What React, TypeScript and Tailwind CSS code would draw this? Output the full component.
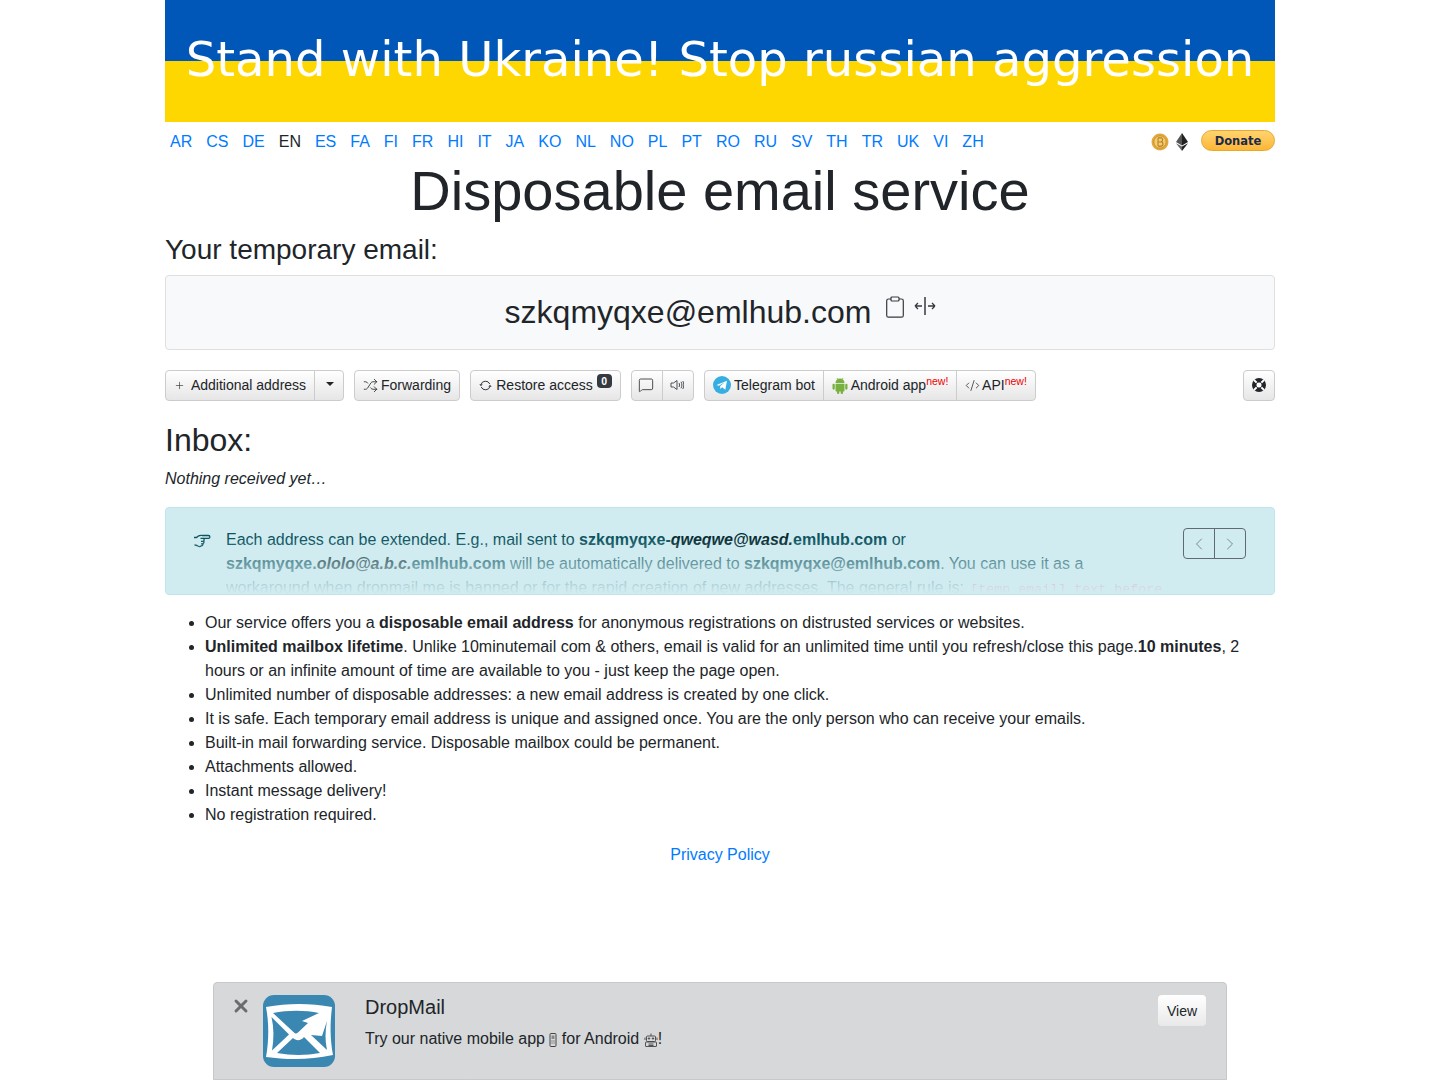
import { Plus, Shuffle, MessageSquare, ChevronLeft, ChevronRight, CodeXml, X } from "lucide-react";

const langs = ["AR", "CS", "DE", "EN", "ES", "FA", "FI", "FR", "HI", "IT", "JA", "KO", "NL", "NO", "PL", "PT", "RO", "RU", "SV", "TH", "TR", "UK", "VI", "ZH"];

const btn = "flex h-[31px] items-center border border-[#ccc] bg-gradient-to-b from-white to-[#e6e6e6] pb-px text-[14px] text-[#212529]";

function Bitcoin() {
    return (
        <svg width="18" height="18" viewBox="0 0 18 18">
            <circle cx="9" cy="9" r="8.500" fill="#e2a93c" />
            <circle cx="9" cy="9" r="6.200" fill="#f3cd73" stroke="#c98f28" />
            <path d="M7 5h3c2.200 0 2.200 3.600 0 3.800 2.600 0 2.600 4.200 0 4.200H7M7 5v8M7 9h3M8.200 4v1M10 4v1M8.200 13v1M10 13v1" fill="none" stroke="#b9811f" strokeWidth="1.100" />
        </svg>
    );
}

function Ethereum() {
    return (
        <svg width="12" height="18" viewBox="0 0 12 18">
            <path d="M6 0 0 9l6 3.400z" fill="#555" />
            <path d="M6 0l6 9-6 3.400z" fill="#222" />
            <path d="M0 10.300 6 18v-4.400z" fill="#666" />
            <path d="M12 10.300 6 18v-4.400z" fill="#222" />
        </svg>
    );
}

function ClipboardIcon() {
    return (
        <svg width="18" height="22" viewBox="0 0 18 22" fill="none" stroke="#343a40" strokeWidth="1.200">
            <path d="M5 3H2.500A1.800 1.800 0 0 0 .7 4.800v14.600a1.800 1.800 0 0 0 1.800 1.800h13a1.800 1.800 0 0 0 1.800-1.800V4.800A1.800 1.800 0 0 0 15.500 3H13" />
            <rect x="5" y="1" width="8" height="4" rx="1" />
        </svg>
    );
}

function MoveHorizontal() {
    return (
        <svg width="22" height="18" viewBox="0 0 22 18" fill="none" stroke="#343a40" strokeWidth="1.300">
            <path d="M11 0v18" strokeWidth="1.500" />
            <path d="M1 9h7M1 9l3-3M1 9l3 3M14 9h7M21 9l-3-3M21 9l-3 3" />
        </svg>
    );
}

function Repeat() {
    return (
        <svg width="13" height="13" viewBox="0 0 13 13" fill="none" stroke="#343a40" strokeWidth="1">
            <path d="M2 5.500A4.700 4.700 0 0 1 10.800 5M11 7.500A4.700 4.700 0 0 1 2.200 8" />
            <path d="M.3 5.300h3.400L2 7.300zM12.700 7.700H9.300L11 5.700z" fill="#343a40" stroke="none" />
        </svg>
    );
}

function Speaker() {
    return (
        <svg width="14" height="12" viewBox="0 0 14 12" fill="none" stroke="#495057" strokeWidth="1">
            <path d="M1 4h2.500L7 1.500v9L3.500 8H1z" />
            <path d="M9 4c.7 1.200.7 2.800 0 4M11 2.800c1.200 2 1.200 4.400 0 6.400M12.800 2c1.400 2.500 1.400 5.500 0 8" />
        </svg>
    );
}

function Lifebuoy() {
    return (
        <svg width="14" height="14" viewBox="0 0 14 14">
            <circle cx="7" cy="7" r="7" fill="#212529" />
            <path d="M2 2l10 10M12 2 2 12" stroke="white" strokeWidth="1.800" />
            <circle cx="7" cy="7" r="3" fill="white" stroke="#212529" strokeWidth="0.800" />
        </svg>
    );
}

function Telegram() {
    return (
        <svg width="18" height="18" viewBox="0 0 18 18">
            <circle cx="9" cy="9" r="9" fill="#37aee2" />
            <path d="M3.500 9l10.500-4.300-1.700 9-3.200-2.400-1.700 1.700-.3-2.800 4.800-4.200-6 3.700z" fill="white" />
        </svg>
    );
}

function Android() {
    return (
        <svg width="16" height="17" viewBox="0 0 16 17" fill="#78b13f">
            <path d="M3.500 6a4.500 4.500 0 0 1 9 0z" />
            <path d="M5 1l1.200 2M11 1 9.800 3" stroke="#78b13f" strokeWidth="0.800" />
            <path d="M3.500 6.700h9v6.800a1 1 0 0 1-1 1h-7a1 1 0 0 1-1-1z" />
            <rect x="0.500" y="6.700" width="2.300" height="6" rx="1.100" />
            <rect x="13.200" y="6.700" width="2.300" height="6" rx="1.100" />
            <rect x="5" y="13" width="2.300" height="4" rx="1.100" />
            <rect x="8.700" y="13" width="2.300" height="4" rx="1.100" />
        </svg>
    );
}

function HandRight() {
    return (
        <svg width="18" height="15" viewBox="0 0 18 15" fill="none" stroke="#0c5460" strokeWidth="1.300" strokeLinejoin="round">
            <path d="M1 3.500h2.500C5.500 1.500 7.500 1 9 1.500h6.500c1.800 0 1.800 2.800 0 2.800H10.500c.8 1 .8 2 .2 2.800.6 1 .2 2-.7 2.500.1 1.400-.7 2.200-1.700 2.200-1 1-3 1-4-.2-.8-.4-1.500-.6-2.800-.6" />
            <path d="M7.500 4.300h3M8 7.300h2.700M8 9.800h2" />
        </svg>
    );
}

function Phone() {
    return (
        <svg width="8" height="15" viewBox="0 0 8 15" className="inline-block align-[-3px]" fill="none" stroke="#444">
            <rect x="1" y="1.500" width="6" height="13" rx="1" />
            <rect x="2.500" y="3.500" width="3" height="3.500" fill="#888" stroke="none" />
            <path d="M2.500 9h3M2.500 11h3" strokeDasharray="1 1" />
        </svg>
    );
}

function Robot() {
    return (
        <svg width="14" height="14" viewBox="0 0 14 14" className="inline-block align-[-3px]" fill="none" stroke="#444" strokeWidth="0.900">
            <rect x="2.500" y="3" width="9" height="5.500" rx="1" />
            <rect x="1.500" y="9" width="11" height="4.500" rx="0.500" />
            <path d="M7 .5v2.500M1 4.500v2.500M13 4.500v2.500M4.500 11h5M4.500 12.500h5" />
            <circle cx="5" cy="5.500" r="0.700" fill="#444" />
            <circle cx="9" cy="5.500" r="0.700" fill="#444" />
        </svg>
    );
}

function MailLogo() {
    return (
        <svg width="72" height="72" viewBox="0 0 72 72">
            <rect width="72" height="72" rx="11" fill="#3a87b2" />
            <path d="M3 12C25 8 47 8 69 12 67 28 67 44 70 60 47 65 25 65 3 62 6 45 6 28 3 12z" fill="white" />
            <path d="M10 18C25 15 42 15 56 18L39 26 45 28 35 37.500c-1.500 1.200-3 1.200-4 0z" fill="#3a87b2" />
            <path d="M8.500 22 26 39.500 9 55.500C11 44 11 33 8.500 22z" fill="#3a87b2" />
            <path d="M14 58 30 43c3 3 8 3 11-1L57 58C43 60.500 28 60.500 14 58z" fill="#3a87b2" />
            <path d="M64 26C62 36 62 46 64 55L48 40 59 41z" fill="#3a87b2" />
        </svg>
    );
}

export default function App() {
    return (
        <div className="min-h-[1080px] bg-white font-['Liberation_Sans',Arial,sans-serif] text-[16px] leading-6 text-[#212529]">
            <div className="mx-auto w-[1110px]">
                {/* flag */}
                <div className="flex h-[122px] items-center justify-center bg-gradient-to-b from-[#0057b7] from-50% to-[#ffd700] to-50% pb-[3px] font-['DejaVu_Sans',sans-serif] text-[48.100px] leading-none whitespace-nowrap text-white">
                    Stand with Ukraine! Stop russian aggression
                </div>

                <div className="flex h-[38px] items-center justify-between">
                    <div className="mt-[2px] flex gap-1">
                        {langs.map((l) => (
                            <a key={l} className={l === "EN" ? "px-[5px] text-[#212529]" : "px-[5px] text-[#007bff]"}>{l}</a>
                        ))}
                    </div>
                    <div className="-mt-[1px] flex items-center">
                        <span className="mt-[3px]"><Bitcoin /></span>
                        <span className="mt-[3px] ml-[7px]"><Ethereum /></span>
                        <div className="ml-[13px] flex h-[21px] w-[74px] items-center justify-center rounded-full border border-[#e5a92c] bg-gradient-to-b from-[#ffd46e] to-[#fdb635] font-['DejaVu_Sans',sans-serif] text-[11.500px] font-bold text-[#1a2a4a]">Donate</div>
                    </div>
                </div>

                <h1 className="text-center text-[56px] leading-[61px]">Disposable email service</h1>
                <h3 className="mt-3 text-[28px] leading-[34px]">Your temporary email:</h3>

                <div className="mt-2 flex h-[75px] items-start justify-center rounded border border-[#dfdfdf] bg-[#f8f9fa] pt-[17px] pl-[1px]">
                    <span className="text-[32px] leading-[38px]">szkqmyqxe@emlhub.com</span>
                    <span className="mt-[3px] ml-[15px]"><ClipboardIcon /></span>
                    <span className="mt-[4px] ml-[10px]"><MoveHorizontal /></span>
                </div>

                {/* toolbar */}
                <div className="mt-5 flex items-center">
                    <div className="flex">
                        <div className={`${btn} w-[150px] justify-center gap-[6px] rounded-l`}>
                            <Plus size={11} strokeWidth={1.300} />
                            Additional address
                        </div>
                        <div className={`${btn} -ml-px w-[30px] justify-center rounded-r`}>
                            <span className="mb-[3px] ml-[2px] h-0 w-0 border-x-4 border-t-4 border-x-transparent border-t-[#212529]" />
                        </div>
                    </div>
                    <div className={`${btn} ml-[10px] w-[106px] justify-center gap-[3px] rounded`}>
                        <Shuffle size={15} strokeWidth={1.300} />
                        Forwarding
                    </div>
                    <div className={`${btn} ml-[10px] w-[151px] justify-center gap-[4px] rounded`}>
                        <Repeat />
                        Restore access
                        <span className="-mt-2 flex h-[14px] w-[15px] items-center justify-center rounded bg-[#343a40] text-[10.500px] font-bold text-white">0</span>
                    </div>
                    <div className="ml-[10px] flex">
                        <div className={`${btn} w-[32px] justify-center rounded-l pr-[2px]`}>
                            <MessageSquare size={16} strokeWidth={1.200} />
                        </div>
                        <div className={`${btn} -ml-px w-[32px] justify-center rounded-r pr-[2px]`}>
                            <Speaker />
                        </div>
                    </div>
                    <div className="ml-[10px] flex">
                        <div className={`${btn} w-[120px] justify-center gap-[3px] rounded-l`}>
                            <Telegram />
                            Telegram bot
                        </div>
                        <div className={`${btn} -ml-px w-[134px] justify-center gap-[3px] rounded-none`}>
                            <Android />
                            <span>Android app<sup className="-top-[5px] text-[10.500px] text-[#ee0000]">new!</sup></span>
                        </div>
                        <div className={`${btn} -ml-px w-[80px] justify-center gap-[2px] rounded-r`}>
                            <CodeXml size={15} strokeWidth={1.200} />
                            <span>API<sup className="-top-[5px] text-[10.500px] text-[#ee0000]">new!</sup></span>
                        </div>
                    </div>
                    <div className={`${btn} ml-auto w-[32px] justify-center rounded`}>
                        <Lifebuoy />
                    </div>
                </div>

                <h3 className="mt-5 text-[32px] leading-[38px]">Inbox:</h3>
                <p className="mt-2 italic">Nothing received yet…</p>

                {/* hint */}
                <div className="relative mt-4 h-[88px] overflow-hidden rounded border border-[#bee5eb] bg-[#d1ecf1]">
                    <div className="flex px-[27px] pt-5 text-[#0c5460]">
                        <span className="mt-[6px] shrink-0"><HandRight /></span>
                        <p className="ml-[15px] w-[938px] shrink-0">
                            Each address can be extended. E.g., mail sent to <b>szkqmyqxe-<i className="text-[#062c33]">qweqwe@wasd.</i>emlhub.com</b> or{" "}
                            <b>szkqmyqxe.<i className="text-[#062c33]">ololo@a.b.c.</i>emlhub.com</b> will be automatically delivered to <b>szkqmyqxe@emlhub.com</b>. You can use it as a workaround when dropmail.me is banned or for the rapid creation of new addresses. The general rule is: <code className="ml-[2px] font-['Liberation_Mono',monospace] text-[13.330px] text-[#e83e8c]">[temp_email]_text_before</code>
                        </p>
                    </div>
                    <div className="absolute inset-x-0 bottom-0 h-[56px] bg-gradient-to-b from-[#d1ecf1]/0 to-[#d1ecf1]" />
                    <div className="absolute top-[20px] right-[28px] flex h-[31px] w-[63px] rounded border border-[#5f6a72] text-[#6c757d]">
                        <span className="flex flex-1 items-center justify-center border-r border-[#5f6a72]"><ChevronLeft size={20} strokeWidth={1} /></span>
                        <span className="flex flex-1 items-center justify-center"><ChevronRight size={20} strokeWidth={1} /></span>
                    </div>
                </div>

                <ul className="mt-4 list-disc pl-10">
                    <li>Our service offers you a <b>disposable email address</b> for anonymous registrations on distrusted services or websites.</li>
                    <li><b>Unlimited mailbox lifetime</b>. Unlike 10minutemail com &amp; others, email is valid for an unlimited time until you refresh/close this page.<b>10 minutes</b>, 2 hours or an infinite amount of time are available to you - just keep the page open.</li>
                    <li>Unlimited number of disposable addresses: a new email address is created by one click.</li>
                    <li>It is safe. Each temporary email address is unique and assigned once. You are the only person who can receive your emails.</li>
                    <li>Built-in mail forwarding service. Disposable mailbox could be permanent.</li>
                    <li>Attachments allowed.</li>
                    <li>Instant message delivery!</li>
                    <li>No registration required.</li>
                </ul>

                <p className="mt-4 text-center text-[#007bff]">Privacy Policy</p>
            </div>

            {/* app banner */}
            <div className="fixed bottom-0 left-1/2 flex h-[98px] w-[1014px] -translate-x-1/2 rounded-t border border-[#c6c8ca] bg-[#d6d8da]">
                <X className="mt-[13px] ml-[17px]" size={20} strokeWidth={3.500} color="#6a6c6e" />
                <div className="mt-3 ml-3"><MailLogo /></div>
                <div className="mt-[12px] ml-[30px]">
                    <div className="text-[20px] leading-6">DropMail</div>
                    <div className="mt-2">Try our native mobile app <Phone /> for Android <Robot />!</div>
                </div>
                <div className="mt-3 mr-5 ml-auto flex h-[31px] w-[48px] items-center justify-center rounded bg-gradient-to-b from-white to-[#e9e9e9] text-[14px]">View</div>
            </div>
        </div>
    );
}
